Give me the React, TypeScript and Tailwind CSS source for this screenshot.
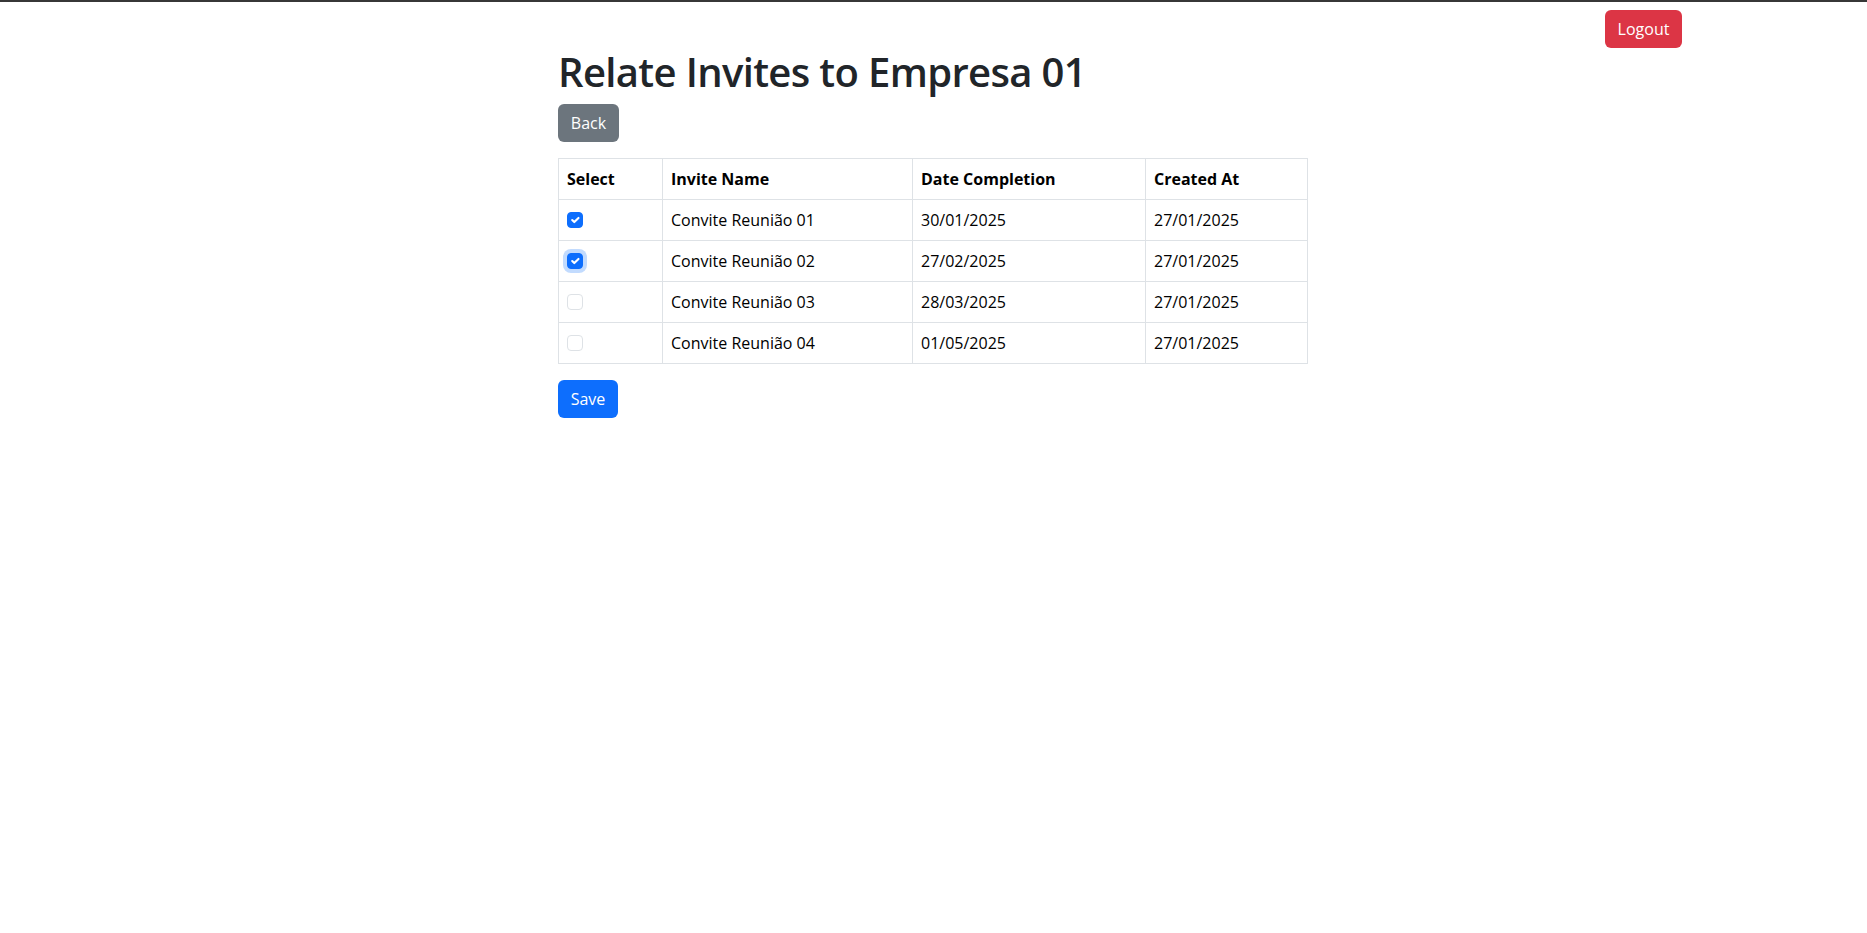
import React from "react";

const rows = [
  { name: "Convite Reunião 01", date: "30/01/2025", created: "27/01/2025", checked: true, focus: false },
  { name: "Convite Reunião 02", date: "27/02/2025", created: "27/01/2025", checked: true, focus: true },
  { name: "Convite Reunião 03", date: "28/03/2025", created: "27/01/2025", checked: false, focus: false },
  { name: "Convite Reunião 04", date: "01/05/2025", created: "27/01/2025", checked: false, focus: false },
];

function Check({ checked, focus }: { checked: boolean; focus: boolean }) {
  return (
    <span
      className={
        "mt-1 flex h-4 w-4 items-center justify-center rounded-[4px] border " +
        (checked ? "border-[#0d6efd] bg-[#0d6efd] " : "border-[#dee2e6] bg-white ") +
        (focus ? "shadow-[0_0_0_4px_rgba(13,110,253,0.25)]" : "")
      }
    >
      {checked && (
        <svg viewBox="0 0 20 20" width="14" height="14">
          <path d="M6 10l3 3l6-6" fill="none" stroke="#fff" strokeWidth="3" strokeLinecap="round" strokeLinejoin="round" />
        </svg>
      )}
    </span>
  );
}

export default function App() {
  return (
    <div className="min-h-[933px] bg-white text-[16px] leading-6 text-[#212529] [font-family:'Open_Sans',sans-serif]">
      <div className="h-[2px] bg-[#373737]" />
      <div className="flex justify-end pr-[185px] pt-2">
        <button className="h-[38px] w-[77px] rounded-[6px] bg-[#dc3545] text-white">Logout</button>
      </div>
      <div className="ml-[558px] w-[749px]">
        <h1 className="mb-2 text-[40px] font-semibold leading-[48px] tracking-[-0.65px] text-[#212529]">Relate Invites to Empresa 01</h1>
        <button className="h-[38px] w-[61px] rounded-[6px] bg-[#6c757d] text-white">Back</button>
        <table className="mt-4 w-[749px] table-fixed border-collapse text-black">
          <colgroup>
            <col className="w-[104px]" />
            <col className="w-[250px]" />
            <col className="w-[233px]" />
            <col className="w-[162px]" />
          </colgroup>
          <thead>
            <tr>
              <th className="border border-[#dee2e6] p-2 text-left font-bold">Select</th>
              <th className="border border-[#dee2e6] p-2 text-left font-bold">Invite Name</th>
              <th className="border border-[#dee2e6] p-2 text-left font-bold">Date Completion</th>
              <th className="border border-[#dee2e6] p-2 text-left font-bold">Created At</th>
            </tr>
          </thead>
          <tbody>
            {rows.map((r) => (
              <tr key={r.name}>
                <td className="h-[41px] border border-[#dee2e6] p-2 align-top">
                  <Check checked={r.checked} focus={r.focus} />
                </td>
                <td className="border border-[#dee2e6] p-2">{r.name}</td>
                <td className="border border-[#dee2e6] p-2">{r.date}</td>
                <td className="border border-[#dee2e6] p-2">{r.created}</td>
              </tr>
            ))}
          </tbody>
        </table>
        <button className="mt-4 h-[38px] w-[60px] rounded-[6px] bg-[#0d6efd] text-white">Save</button>
      </div>
    </div>
  );
}
